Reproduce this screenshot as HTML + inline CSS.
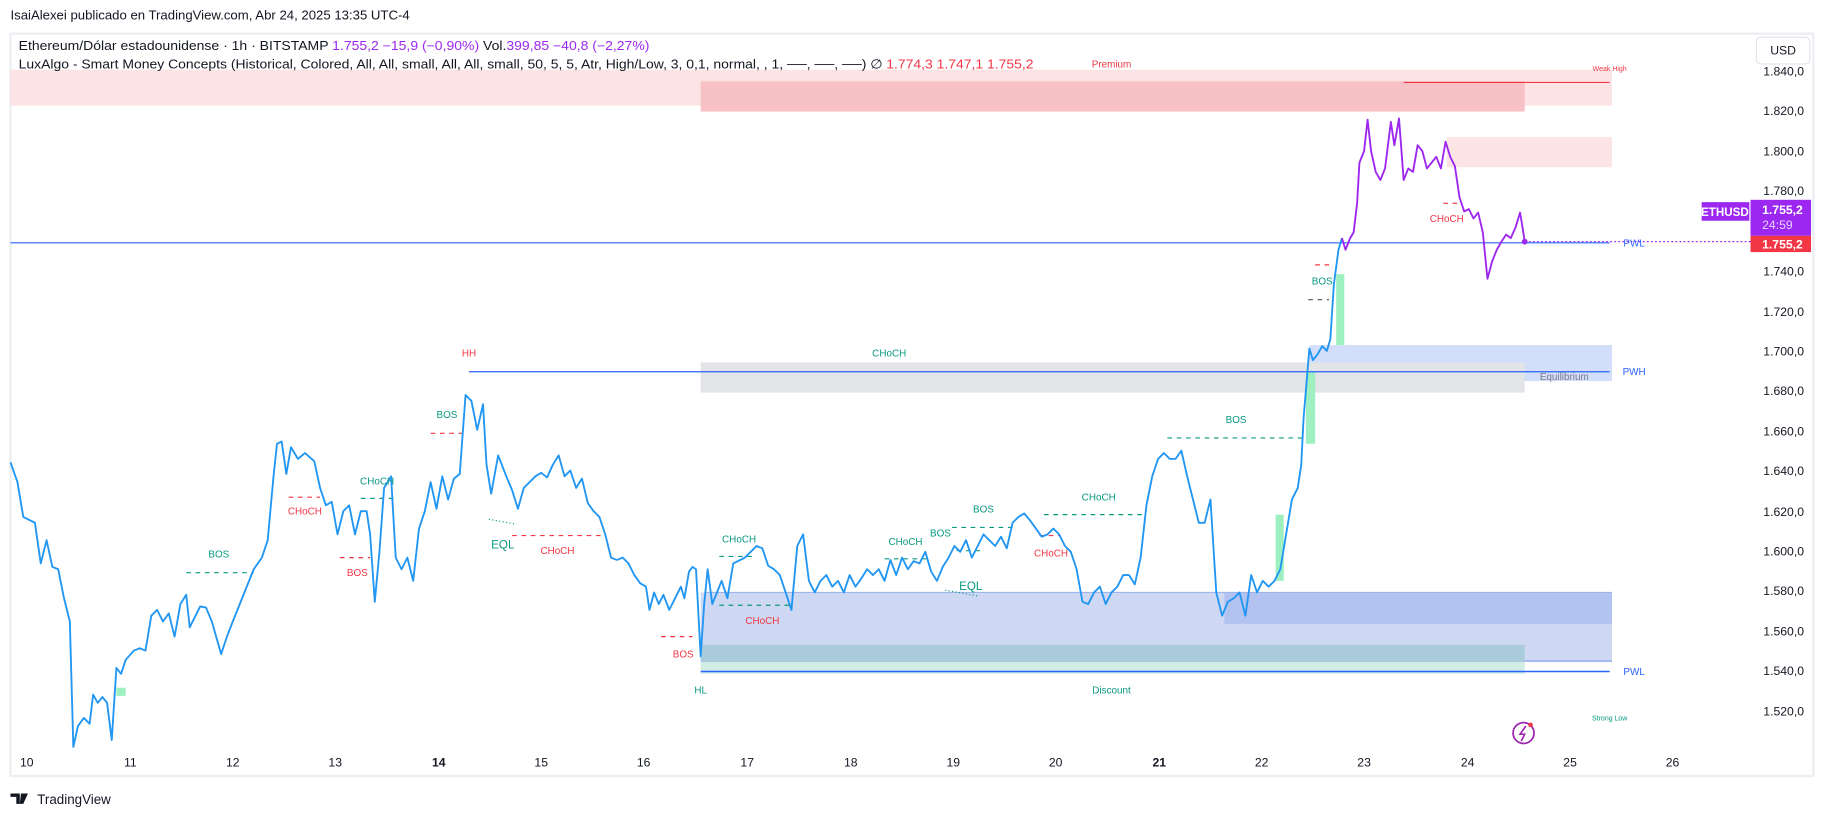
<!DOCTYPE html>
<html><head><meta charset="utf-8"><style>
html,body{margin:0;padding:0;background:#fff;width:1825px;height:819px;overflow:hidden}
svg{display:block}
text{font-family:"Liberation Sans",sans-serif}
</style></head><body>
<svg width="1825" height="819" viewBox="0 0 1568 705" preserveAspectRatio="none" xmlns="http://www.w3.org/2000/svg">
<rect width="1568" height="705" fill="#fff"/>
<text x="9" y="17" font-size="11" fill="#131722" textLength="343" lengthAdjust="spacingAndGlyphs">IsaiAlexei publicado en TradingView.com, Abr 24, 2025 13:35 UTC-4</text>
<rect x="9" y="29" width="1549" height="639" fill="#fff" stroke="#eceef2" stroke-width="2"/>
<!-- zones -->
<rect x="9" y="60" width="1376" height="31" fill="#fce4e5"/>
<rect x="602" y="70" width="708" height="26" fill="#f8c1c6"/>
<rect x="1243" y="118" width="142" height="26" fill="#fce4e5"/>
<rect x="1125" y="297" width="260" height="31" fill="#d3dffa"/>
<rect x="602" y="312" width="708" height="26" fill="#e3e4e8"/>
<rect x="602" y="510" width="783" height="60" fill="#cfd8f3"/>
<rect x="1052" y="510" width="333" height="27" fill="#b2c3f1"/>
<line x1="606" y1="510" x2="1385" y2="510" stroke="#9fb4ea" stroke-width="1"/>
<line x1="606" y1="569" x2="1385" y2="569" stroke="#8fa7e6" stroke-width="1"/>
<rect x="602" y="555" width="708" height="15" fill="#a9cbdc"/>
<rect x="602" y="570" width="708" height="10" fill="#d0ece4"/>
<!-- green bars -->
<rect x="1148" y="236" width="7" height="61" fill="#9ff0c0"/>
<rect x="1122" y="320" width="8" height="62" fill="#9ff0c0"/>
<rect x="1096" y="443" width="7" height="57" fill="#9ff0c0"/>
<rect x="100" y="592" width="8" height="7" fill="#9ff0c0"/>
<!-- lines -->
<line x1="1206" y1="71" x2="1383" y2="71" stroke="#f23645" stroke-width="1"/>
<line x1="403" y1="320" x2="1383" y2="320" stroke="#2962ff" stroke-width="1"/>
<line x1="9" y1="209" x2="1383" y2="209" stroke="#2962ff" stroke-width="1"/>
<line x1="1310" y1="208" x2="1504" y2="208" stroke="#9c27f0" stroke-width="1" stroke-dasharray="1.5 2"/>
<line x1="602" y1="578" x2="1383" y2="578" stroke="#2962ff" stroke-width="1.3"/>
<!-- dashed structure lines -->
<g stroke-width="1" stroke-dasharray="4 4" fill="none">
<path d="M160 493H218M1003 377H1120M618 479H650M760 481H800M818 454H870M897 443H985M618 521H680M822 474H845" stroke="#089981"/>
<path d="M248 428H275M292 480H318M440 461H520M370 373H398M568 548H595M893 461H910M1240 175H1255M1130 228H1145" stroke="#f23645"/>
<path d="M310 429H338" stroke="#089981"/>
<path d="M1124 258H1142" stroke="#555"/>
</g>
<path d="M420 447L442 451" stroke="#089981" stroke-dasharray="1 2"/>
<path d="M812 508L840 513" stroke="#089981" stroke-dasharray="1 2"/>
<!-- price line -->
<polyline fill="none" stroke="#2196f3" stroke-width="1.6" stroke-linejoin="round" points="9,398 15,415 20,445 30,450 35,485 40,465 45,488 50,490 55,515 60,535 63,643 67,625 72,618 77,623 80,598 84,605 88,600 92,605 96,637 100,575 104,580 108,568 115,560 120,558 125,560 130,530 135,525 140,535 145,528 150,548 155,520 160,512 163,540 168,530 172,522 177,523 182,535 190,563 195,548 200,535 210,510 218,490 225,480 230,465 235,410 238,382 242,380 246,408 250,385 256,395 262,390 270,397 275,420 280,435 285,432 290,460 295,440 300,435 305,460 310,440 315,440 318,460 322,518 326,475 330,420 333,415 336,410 340,480 345,490 350,480 355,500 360,455 365,440 370,415 375,438 380,410 385,430 390,412 395,408 400,340 405,345 410,370 415,348 418,400 422,425 428,392 435,410 440,422 445,438 450,420 455,415 460,410 465,407 470,411 475,400 480,392 485,410 490,405 495,420 500,412 505,433 510,440 515,445 520,460 525,480 530,482 535,480 540,485 545,495 550,502 555,505 558,525 562,510 566,520 570,512 575,525 580,515 585,505 588,515 592,492 595,488 598,490 602,565 605,520 608,490 612,520 616,510 620,500 625,515 630,485 640,480 645,475 650,470 655,472 660,487 665,490 670,495 675,510 680,525 685,470 690,460 695,500 700,510 705,500 710,495 715,505 720,500 725,510 730,495 735,505 740,498 745,490 750,495 755,490 760,500 765,482 770,495 775,480 780,490 785,483 790,485 795,475 800,492 805,500 810,488 815,480 820,470 825,475 830,465 835,480 840,470 845,460 850,465 855,470 860,462 865,472 870,450 875,445 880,442 885,448 890,455 895,462 900,460 905,455 910,460 915,470 920,475 925,490 930,518 935,520 940,510 945,505 950,520 955,510 960,505 965,495 970,495 975,503 980,480 985,435 990,410 995,395 1000,390 1005,395 1010,395 1015,388 1020,410 1025,430 1030,450 1035,450 1040,430 1045,510 1050,530 1055,518 1060,515 1065,510 1070,530 1075,495 1080,510 1085,500 1090,505 1095,500 1100,490 1105,460 1110,430 1115,420 1118,400 1120,360 1125,300 1128,310 1132,305 1136,298 1140,302 1143,292 1146,245 1150,215 1153,205"/>
<polyline fill="none" stroke="#9c27f0" stroke-width="1.6" stroke-linejoin="round" points="1153,205 1156,215 1160,205 1163,200 1166,175 1168,140 1172,130 1175,103 1178,130 1182,148 1186,155 1190,145 1195,105 1198,125 1202,102 1206,155 1210,145 1214,148 1218,125 1222,130 1226,145 1230,140 1234,135 1238,145 1242,122 1246,135 1250,143 1254,170 1258,182 1262,180 1266,188 1270,183 1274,200 1278,240 1282,225 1286,215 1290,208 1294,202 1298,205 1302,196 1306,183 1308,195 1310,208"/>
<circle cx="1310" cy="208" r="2.5" fill="#9c27f0"/>
<!-- labels -->
<g font-size="8.5" text-anchor="middle">
<g fill="#089981">
<text x="188" y="480">BOS</text><text x="324" y="417">CHoCH</text><text x="384" y="360">BOS</text>
<text x="635" y="467">CHoCH</text><text x="778" y="469">CHoCH</text><text x="808" y="462">BOS</text>
<text x="845" y="441">BOS</text><text x="944" y="431">CHoCH</text><text x="1062" y="364">BOS</text>
<text x="764" y="307">CHoCH</text><text x="602" y="597">HL</text><text x="955" y="597">Discount</text>
<text x="1136" y="245">BOS</text>
<text x="432" y="472" font-size="10">EQL</text><text x="834" y="508" font-size="10">EQL</text>
<text x="1383" y="620" font-size="6">Strong Low</text>
</g>
<g fill="#f23645">
<text x="262" y="443">CHoCH</text><text x="307" y="496">BOS</text><text x="479" y="477">CHoCH</text>
<text x="655" y="537">CHoCH</text><text x="587" y="566">BOS</text><text x="903" y="479">CHoCH</text>
<text x="1243" y="191">CHoCH</text><text x="403" y="307">HH</text><text x="955" y="58">Premium</text>
<text x="1383" y="61" font-size="6">Weak High</text>
</g>
<text x="1344" y="327" fill="#787b86">Equilibrium</text>
<g fill="#2962ff"><text x="1404" y="323">PWH</text><text x="1404" y="212">PWL</text><text x="1404" y="581">PWL</text></g>
</g>
<!-- legend -->
<text x="16" y="43" font-size="11" fill="#131722" textLength="542" lengthAdjust="spacingAndGlyphs">Ethereum/Dólar estadounidense · 1h · BITSTAMP  <tspan fill="#9c27f0">1.755,2  −15,9 (−0,90%)</tspan>  Vol.<tspan fill="#9c27f0">399,85  −40,8 (−2,27%)</tspan></text>
<text x="16" y="59" font-size="11" fill="#131722" textLength="872" lengthAdjust="spacingAndGlyphs">LuxAlgo - Smart Money Concepts (Historical, Colored, All, All, small, All, All, small, 50, 5, 5, Atr, High/Low, 3, 0,1, normal, , 1, ──, ──, ──)  ∅  <tspan fill="#f23645">1.774,3  1.747,1  1.755,2</tspan></text>
<!-- axis -->
<rect x="1509" y="32" width="46" height="23" rx="4" fill="#fff" stroke="#e0e3eb"/>
<text x="1532" y="47" font-size="10.5" text-anchor="middle" fill="#131722">USD</text>
<g font-size="10.5" fill="#131722">
<text x="1515" y="65">1.840,0</text><text x="1515" y="99">1.820,0</text><text x="1515" y="134">1.800,0</text><text x="1515" y="168">1.780,0</text><text x="1515" y="237">1.740,0</text><text x="1515" y="272">1.720,0</text><text x="1515" y="306">1.700,0</text><text x="1515" y="340">1.680,0</text><text x="1515" y="375">1.660,0</text><text x="1515" y="409">1.640,0</text><text x="1515" y="444">1.620,0</text><text x="1515" y="478">1.600,0</text><text x="1515" y="512">1.580,0</text><text x="1515" y="547">1.560,0</text><text x="1515" y="581">1.540,0</text><text x="1515" y="616">1.520,0</text>
</g>
<rect x="1462" y="174" width="41" height="16" fill="#9c27f0"/>
<text x="1482" y="186" font-size="10" font-weight="bold" text-anchor="middle" fill="#fff">ETHUSD</text>
<rect x="1504" y="172" width="52" height="31" fill="#9c27f0"/>
<text x="1514" y="184" font-size="10.5" font-weight="bold" fill="#fff">1.755,2</text>
<text x="1514" y="197" font-size="10.5" fill="#e8d0ff">24:59</text>
<rect x="1504" y="203" width="52" height="14" fill="#f23645"/>
<text x="1514" y="214" font-size="10.5" font-weight="bold" fill="#fff">1.755,2</text>
<g font-size="10.5" fill="#131722" text-anchor="middle">
<text x="23" y="660">10</text><text x="112" y="660">11</text><text x="200" y="660">12</text><text x="288" y="660">13</text><text x="377" y="660" font-weight="bold">14</text><text x="465" y="660">15</text><text x="553" y="660">16</text><text x="642" y="660">17</text><text x="731" y="660">18</text><text x="819" y="660">19</text><text x="907" y="660">20</text><text x="996" y="660" font-weight="bold">21</text><text x="1084" y="660">22</text><text x="1172" y="660">23</text><text x="1261" y="660">24</text><text x="1349" y="660">25</text><text x="1437" y="660">26</text>
</g>
<circle cx="1309" cy="631" r="9" fill="none" stroke="#9c27b0" stroke-width="1.5"/>
<path d="M1311 625L1306 632H1310L1307 638" fill="none" stroke="#9c27b0" stroke-width="1.4"/>
<circle cx="1315" cy="624" r="2" fill="#f23645"/>
<path d="M9 683H17V692H14V686H9Z M18 683H24L20 692H17Z" fill="#131722"/>
<text x="32" y="692" font-size="11.5" fill="#131722">TradingView</text>
</svg>
</body></html>
